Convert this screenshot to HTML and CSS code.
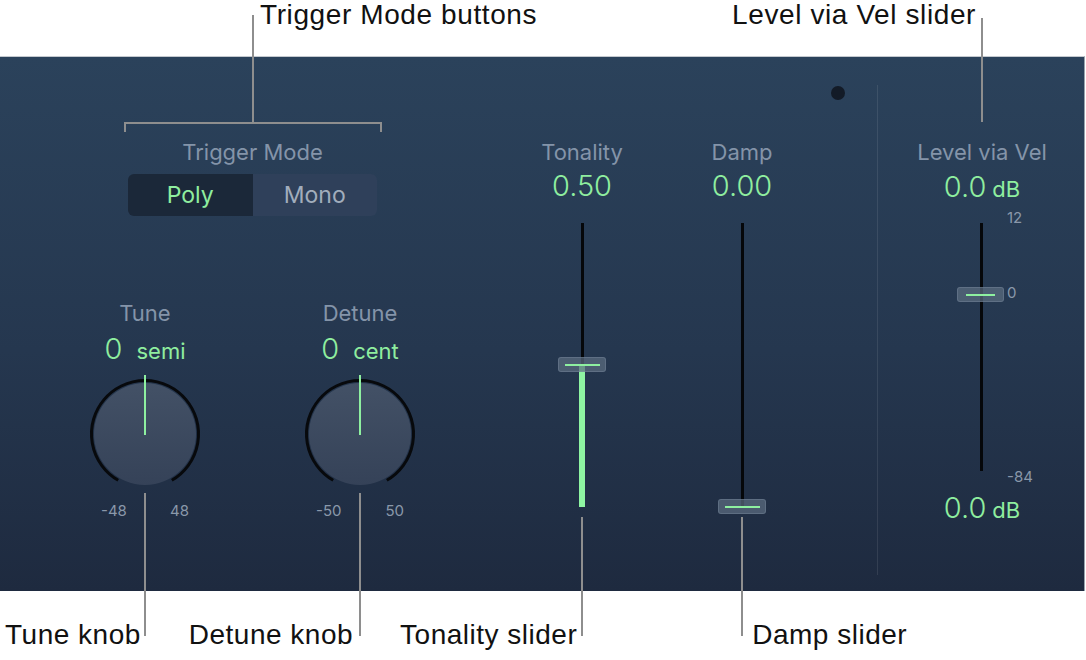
FILE: index.html
```html
<!DOCTYPE html>
<html>
<head>
    <link rel="stylesheet" href="styles.css">
</head>
<body>
  <div class="page">
    <div class="notes-top">
      <span class="note note-trigger">Trigger Mode buttons</span>
      <span class="note note-level">Level via Vel slider</span>
    </div>

    <div class="panel">
      <div class="left">
        <div class="trigger">
          <div class="label">Trigger Mode</div>
          <div class="seg">
            <button type="button" class="seg-btn selected">Poly</button>
            <button type="button" class="seg-btn">Mono</button>
          </div>
        </div>

        <div class="knobs">
          <div class="knob-col">
            <div class="label">Tune</div>
            <div class="value"><span class="num">0</span><span class="unit">semi</span></div>
            <svg class="knob" width="120" height="120" viewBox="0 0 120 120">
              <defs>
                <linearGradient id="kb1" x1="0" y1="0" x2="0" y2="1">
                  <stop offset="0" stop-color="#435166"/>
                  <stop offset="1" stop-color="#354258"/>
                </linearGradient>
              </defs>
              <path d="M33.2 106.3 A53.5 53.5 0 1 1 86.8 106.3" fill="none" stroke="#07090c" stroke-width="3"/>
              <circle cx="60" cy="60" r="51" fill="url(#kb1)"/>
              <line x1="60" y1="1" x2="60" y2="61" stroke="#8ef0a0" stroke-width="2"/>
            </svg>
            <div class="range"><span>-48</span><span>48</span></div>
          </div>
          <div class="knob-col">
            <div class="label">Detune</div>
            <div class="value"><span class="num">0</span><span class="unit">cent</span></div>
            <svg class="knob" width="120" height="120" viewBox="0 0 120 120">
              <defs>
                <linearGradient id="kb2" x1="0" y1="0" x2="0" y2="1">
                  <stop offset="0" stop-color="#435166"/>
                  <stop offset="1" stop-color="#354258"/>
                </linearGradient>
              </defs>
              <path d="M33.2 106.3 A53.5 53.5 0 1 1 86.8 106.3" fill="none" stroke="#07090c" stroke-width="3"/>
              <circle cx="60" cy="60" r="51" fill="url(#kb2)"/>
              <line x1="60" y1="1" x2="60" y2="61" stroke="#8ef0a0" stroke-width="2"/>
            </svg>
            <div class="range"><span>-50</span><span>50</span></div>
          </div>
        </div>
      </div>

      <div class="slider-col">
        <div class="label">Tonality</div>
        <div class="value"><span class="num">0.50</span></div>
        <div class="slider">
          <div class="track"></div>
          <div class="fill" style="top: 141px;"></div>
          <div class="thumb" style="top: 134px;"><span class="thumb-line"></span></div>
        </div>
      </div>

      <div class="slider-col damp">
        <div class="label">Damp</div>
        <div class="value"><span class="num">0.00</span></div>
        <div class="slider">
          <div class="track"></div>
          <div class="thumb" style="top: 276px;"><span class="thumb-line"></span></div>
        </div>
      </div>

      <div class="led-col"><span class="led"></span></div>
      <div class="divider"></div>

      <div class="level-col">
        <div class="label">Level via Vel</div>
        <div class="value level-value"><span class="num">0.0</span><span class="unit db">dB</span></div>
        <div class="slider level-slider">
          <div class="track"></div>
          <div class="thumb thumb-small" style="top: 64px;"><span class="thumb-line"></span></div>
          <span class="scale" style="top: -14px;">12</span>
          <span class="scale" style="top: 61px;">0</span>
          <span class="scale" style="top: 245px;">-84</span>
        </div>
        <div class="value level-bottom"><span class="num">0.0</span><span class="unit db">dB</span></div>
      </div>
    </div>

    <div class="notes-bottom">
      <span class="note note-tune">Tune knob</span>
      <span class="note note-detune">Detune knob</span>
      <span class="note note-tonality">Tonality slider</span>
      <span class="note note-damp">Damp slider</span>
    </div>

    <!-- callout lines -->
    <div class="callout line-trigger"></div>
    <div class="bracket"></div>
    <div class="callout line-level"></div>
    <div class="callout line-tune"></div>
    <div class="callout line-detune"></div>
    <div class="callout line-tonality"></div>
    <div class="callout line-damp"></div>
  </div>
</body>
</html>
```

FILE: styles.css
```css
body {
    margin: 0;
    background: #fff;
}

.page {
    position: relative;
    width: 1086px;
    height: 660px;
    overflow: hidden;
    font-family: Inter, "Noto Sans", sans-serif;
}

/* annotations */
.note {
    font-family: "Liberation Sans", Arial, sans-serif;
    font-size: 28px;
    line-height: 30px;
    letter-spacing: 0.6px;
    color: #111;
    white-space: nowrap;
}

.notes-top {
    display: flex;
    height: 56px;
    padding-left: 260px;
    padding-right: 110px;
}

.note-level {
    margin-left: auto;
}

.notes-bottom {
    display: flex;
    padding-top: 29px;
}

.notes-bottom .note {
    letter-spacing: 0.5px;
}

.note-tune { margin-left: 5px; }
.note-detune { margin-left: 48px; }
.note-tonality { margin-left: 47px; }
.note-damp { margin-left: 175px; }

.callout {
    position: absolute;
    width: 2px;
    background: #8e8e8e;
}

.line-trigger { left: 252px; top: 15px; height: 108px; }
.line-level { left: 981px; top: 18px; height: 104px; }
.line-tune { left: 144px; top: 493px; height: 143px; }
.line-detune { left: 359px; top: 493px; height: 143px; }
.line-tonality { left: 581px; top: 517px; height: 119px; }
.line-damp { left: 741px; top: 517px; height: 119px; }

.bracket {
    position: absolute;
    left: 124px;
    top: 122px;
    width: 254px;
    height: 8px;
    border: 2px solid #8e8e8e;
    border-bottom: none;
}

/* plugin panel */
.panel {
    display: flex;
    align-items: flex-start;
    box-sizing: border-box;
    width: 1085px;
    height: 535px;
    border-top: 1px solid #c4c9cf;
    border-right: 1px solid #9aa3ad;
    background: linear-gradient(180deg, #2b425b 0%, #25374f 55%, #1e2a3f 100%);
}

.label {
    font-size: 22px;
    line-height: 24px;
    color: #8494a9;
    text-align: center;
    white-space: nowrap;
}

.value {
    display: flex;
    justify-content: center;
    align-items: baseline;
    height: 32px;
    line-height: 32px;
    color: #8fee9f;
    white-space: nowrap;
}

.num {
    font-size: 29px;
    font-weight: 300;
}

.unit {
    font-size: 22px;
    margin-left: 14px;
}

.unit.db {
    margin-left: 6px;
}

.left {
    width: 375px;
    padding-left: 65px;
    padding-top: 83px;
}

.trigger {
    display: flex;
    flex-direction: column;
    align-items: center;
}

.seg {
    display: flex;
    margin-top: 10px;
    width: 249px;
    height: 42px;
    border-radius: 6px;
    overflow: hidden;
}

.seg-btn {
    flex: 1;
    border: none;
    margin: 0;
    padding: 0;
    font-family: Inter, "Noto Sans", sans-serif;
    font-size: 23px;
    background: #2f405a;
    color: #a1adbc;
}

.seg-btn.selected {
    background: #1b2839;
    color: #8fee9f;
}

.knobs {
    display: flex;
    gap: 55px;
    margin-top: 85px;
}

.knob-col {
    width: 160px;
    display: flex;
    flex-direction: column;
    align-items: center;
}

.knob-col .value {
    margin-top: 8px;
}

.knob {
    display: block;
    margin-top: 9px;
}

.range {
    display: flex;
    justify-content: space-between;
    width: 88px;
    margin-top: 8px;
    font-size: 15px;
    line-height: 18px;
    color: #8a98aa;
}

.slider-col {
    width: 120px;
    margin-left: 82px;
    padding-top: 83px;
    display: flex;
    flex-direction: column;
    align-items: center;
}

.slider-col.damp {
    margin-left: 40px;
}

.slider-col .value {
    margin-top: 6px;
}

.slider {
    position: relative;
    width: 48px;
    height: 283px;
    margin-top: 21px;
}

.track {
    width: 3px;
    height: 100%;
    margin: 0 auto;
    background: #05070a;
}

.fill {
    position: absolute;
    left: 21px;
    bottom: -1px;
    width: 6px;
    background: #8ef5a2;
}

.thumb {
    position: absolute;
    left: 0;
    width: 48px;
    height: 15px;
    box-sizing: border-box;
    border-radius: 3px;
    border: 1px solid rgba(140, 155, 175, 0.3);
    background: rgba(92, 108, 128, 0.72);
    display: flex;
    align-items: center;
    justify-content: center;
}

.thumb-line {
    width: 35px;
    height: 2px;
    background: #8ef0a0;
}

.thumb-small {
    width: 47px;
}

.thumb-small .thumb-line {
    width: 29px;
}

.led-col {
    width: 75px;
    padding-top: 29px;
}

.led {
    display: block;
    width: 14px;
    height: 14px;
    margin-left: 29px;
    border-radius: 50%;
    background: #131b27;
}

.divider {
    width: 1px;
    height: 490px;
    margin-top: 28px;
    background: rgba(255, 255, 255, 0.09);
}

.level-col {
    width: 160px;
    margin-left: 24px;
    padding-top: 83px;
    display: flex;
    flex-direction: column;
    align-items: center;
}

.level-value {
    margin-top: 7px;
}

.level-slider {
    height: 248px;
    margin-top: 20px;
    margin-right: 2px;
}

.scale {
    position: absolute;
    left: 50px;
    font-size: 15px;
    line-height: 18px;
    color: #8a98aa;
}

.level-bottom {
    margin-top: 21px;
}
```
